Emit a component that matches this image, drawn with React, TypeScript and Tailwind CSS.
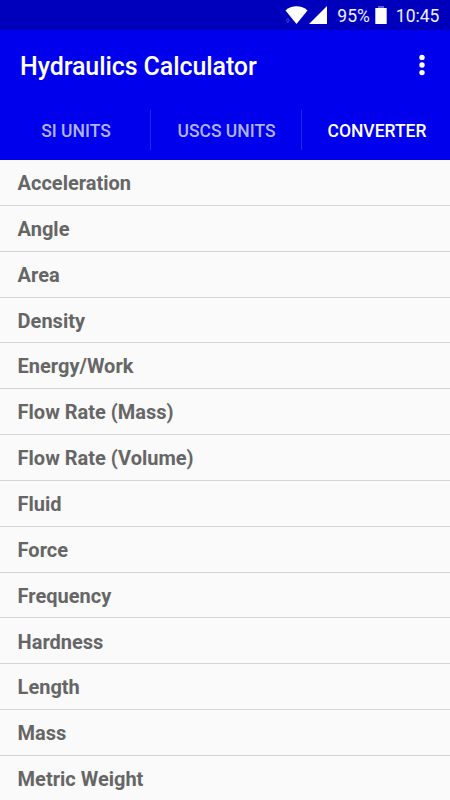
const units = [
  "Acceleration",
  "Angle",
  "Area",
  "Density",
  "Energy/Work",
  "Flow Rate (Mass)",
  "Flow Rate (Volume)",
  "Fluid",
  "Force",
  "Frequency",
  "Hardness",
  "Length",
  "Mass",
  "Metric Weight",
];

function StatusBar() {
  return (
    <div className="flex h-[30px] shrink-0 items-center justify-end bg-[#0000bc] pr-[10.6px] text-[17.5px] text-[#f0f0ff]">
      <svg width="23" height="18" viewBox="0 0 23 18" className="mr-px">
        <path d="M0.5 4.4C6.5 -1.2 16.5 -1.2 22.5 4.4L11.5 18Z" fill="#fff" />
        <ellipse cx="2.8" cy="14.5" rx="1.1" ry="1.8" fill="none" stroke="#4747d8" />
      </svg>
      <svg width="18" height="18" viewBox="0 0 18 18" className="mr-[10px]">
        <path d="M18 0V18H0Z" fill="#fff" />
      </svg>
      <span className="pt-[2px]">95%</span>
      <svg width="12" height="18" viewBox="0 0 12 18" className="ml-[5px] mr-[9px]">
        <path d="M3 0h6v2h-6Z" fill="#5a5ad4" />
        <path d="M0.3 2h11.4v16H0.3Z" fill="#fff" />
      </svg>
      <span className="pt-[2px]">10:45</span>
    </div>
  );
}

function Tabs() {
  return (
    <nav className="flex h-[58px] items-center pb-[2px] text-[17.5px] font-medium text-[#b2b2f8]">
      <button className="h-10 w-[151px] border-r border-[#2525f0] pl-[2px] pt-[2px]">SI UNITS</button>
      <button className="h-10 w-[151px] border-r border-[#2525f0] pl-px pt-[2px]">USCS UNITS</button>
      <button className="h-10 flex-1 pl-[2px] pt-[2px] text-white">CONVERTER</button>
    </nav>
  );
}

export default function App() {
  return (
    <div className="flex h-[800px] w-[450px] flex-col overflow-hidden bg-[#fafafa] font-['Roboto',sans-serif]">
      <StatusBar />
      <header className="h-[130px] shrink-0 bg-[#0000ec]">
        <div className="flex h-[72px] items-center justify-between pl-5 pr-[25px] text-white">
          <h1 className="pt-[2px] text-[25px] font-medium tracking-[-0.09px]">Hydraulics Calculator</h1>
          <svg width="6" height="22" viewBox="0 0 6 22" fill="#fff" className="-mt-[2px]">
            <circle cx="3" cy="3.4" r="2.7" />
            <circle cx="3" cy="11" r="2.7" />
            <circle cx="3" cy="18.6" r="2.7" />
          </svg>
        </div>
        <Tabs />
      </header>
      <ul>
        {units.map((unit) => (
          <li
            key={unit}
            className="flex h-[45.85px] items-center border-b border-[#d5d5d5] pl-[17.6px] pt-[1.4px] text-[20px] font-bold text-[#666]"
          >
            {unit}
          </li>
        ))}
      </ul>
    </div>
  );
}
